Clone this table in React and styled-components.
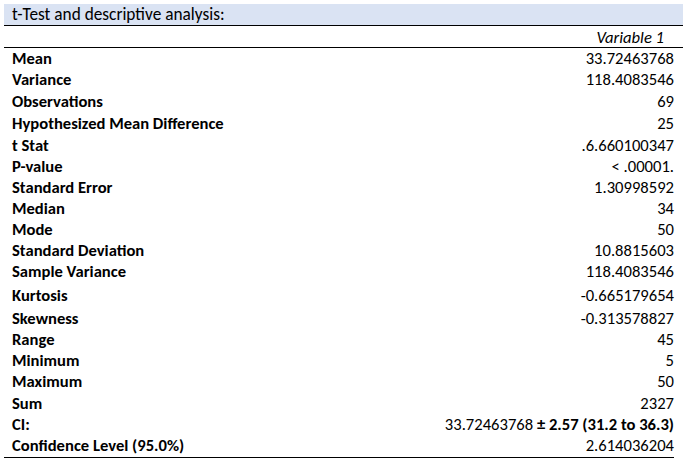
import React from 'react'
import styled, { createGlobalStyle } from 'styled-components'

const GlobalStyle = createGlobalStyle`
    body {
        margin: 0;
        background: #ffffff;
        font-family: Carlito, Lato, "Liberation Sans", sans-serif;
        color: #000000;
    }
`;

const Sheet = styled.div`
    width: 688px;
    height: 462px;
    padding: 4px 5px 0 4px;
    box-sizing: border-box;
`;

const TitleBar = styled.div`
    height: 21px;
    background: #dae3f3;
    border-bottom: 1px solid #000;
    display: flex;
    align-items: center;
    padding-left: 8px;
    font-size: 17.3px;
`;

const ColumnHead = styled.div`
    height: 21px;
    border-bottom: 1px solid #000;
    display: flex;
    align-items: center;
    justify-content: flex-end;
    padding-right: 19px;
    font-size: 16.6px;
    font-style: italic;
`;

const Body = styled.div`
    width: 670px;
    border-bottom: 1px solid #000;
`;

const Row = styled.div`
    display: flex;
    align-items: center;
    justify-content: space-between;
    box-sizing: border-box;
    height: ${p => p.$h}px;
    padding: 0 0 2px 8px;
    font-size: 16.6px;
`;

const Label = styled.span`
    font-weight: 700;
`;

const Value = styled.span`
    text-align: right;
`;

const Strong = styled.b`
    font-weight: 700;
`;

// row heights taken off the original sheet, a few rows are taller
const rows = [
    ['Mean', '33.72463768', 21],
    ['Variance', '118.4083546', 22],
    ['Observations', '69', 22],
    ['Hypothesized Mean Difference', '25', 22],
    ['t Stat', '.6.660100347', 21],
    ['P-value', '< .00001.', 21],
    ['Standard Error', '1.30998592', 21],
    ['Median', '34', 21],
    ['Mode', '50', 21],
    ['Standard Deviation', '10.8815603', 21],
    ['Sample Variance', '118.4083546', 22],
    ['Kurtosis', '-0.665179654', 25],
    ['Skewness', '-0.313578827', 22],
    ['Range', '45', 20],
    ['Minimum', '5', 21],
    ['Maximum', '50', 22],
    ['Sum', '2327', 21],
    ['CI:', 'ci', 21],
    ['Confidence Level (95.0%)', '2.614036204', 22],
]

const App = () => {
    return (
        <>
            <GlobalStyle />
            <Sheet>
                <TitleBar>t-Test and descriptive analysis:</TitleBar>
                <ColumnHead>Variable 1</ColumnHead>
                <Body>
                    {rows.map(([label, value, h]) => (
                        <Row key={label} $h={h}>
                            <Label>{label}</Label>
                            {value === 'ci' ? (
                                <Value>33.72463768 <Strong>± 2.57 (31.2 to 36.3)</Strong></Value>
                            ) : (
                                <Value>{value}</Value>
                            )}
                        </Row>
                    ))}
                </Body>
            </Sheet>
        </>
    )
}

export default App
